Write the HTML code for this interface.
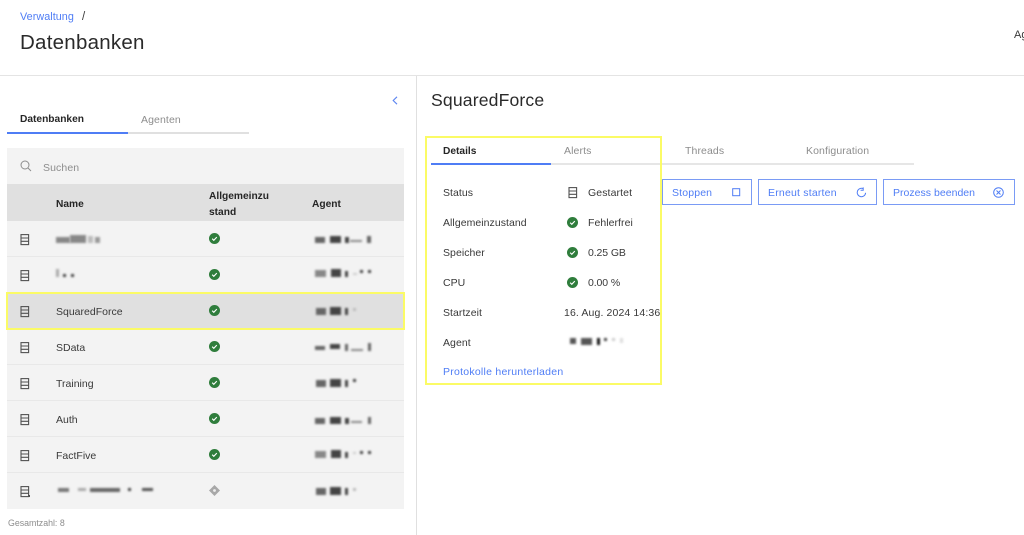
<!DOCTYPE html>
<html lang="de"><head><meta charset="utf-8"><title>Datenbanken</title>
<style>
html,body{margin:0;padding:0;background:#fff}
#p{position:relative;width:1024px;height:535px;overflow:hidden;background:#fff;font-family:"Liberation Sans",sans-serif;color:#393939;font-size:11px}
#p div{position:absolute}
.t{position:absolute;white-space:nowrap;line-height:14px;letter-spacing:0}
.b{font-weight:bold;color:#262626}
.g{color:#8d8d8d}
.l{color:#4f7df5}
.r{left:7px;width:397px;height:35px;background:#f3f3f3;border-bottom:1px solid #e8e8e8}
.btn{top:179px;height:24px;border:1px solid #7a9bf5;background:#fff}
svg{position:absolute;overflow:visible}
i{position:absolute;display:block;background:#444;filter:blur(1px)}
</style></head><body><div id="p">
<svg width="0" height="0" style="position:absolute"><defs>
<g id="db" fill="none" stroke="#525252" stroke-width="1.1"><rect x="1" y=".6" width="7.6" height="10"/><path d="M1 4h7.6M1 7.3h7.6"/></g>
<g id="ok"><circle cx="5.5" cy="5.5" r="5.5" fill="#2f7d3c"/><path d="M3.2 5.7l1.6 1.6 3-3.2" fill="none" stroke="#fff" stroke-width="1.1"/></g>
</defs></svg>

<span class="t l" style="left:20px;top:10px;font-size:10.8px;letter-spacing:.05px">Verwaltung</span>
<span class="t" style="left:82px;top:10px;font-size:11.5px">/</span>
<span class="t" style="left:20px;top:31px;font-size:20.5px;line-height:24px;color:#2a2a2a;letter-spacing:.25px">Datenbanken</span>
<span class="t" style="left:1014px;top:28px;font-size:11px">Ag</span>
<div style="left:0;top:75px;width:1024px;height:1px;background:#e4e4e4"></div>
<div style="left:416px;top:76px;width:1px;height:459px;background:#e0e0e0"></div>

<svg style="left:392px;top:96px" width="6" height="9"><path d="M5 .8L1.2 4.5 5 8.2" fill="none" stroke="#5b84f0" stroke-width="1.1"/></svg>

<span class="t b" style="left:20px;top:113px;font-size:10.2px">Datenbanken</span>
<span class="t g" style="left:141px;top:113px;font-size:10.5px;letter-spacing:.1px">Agenten</span>
<div style="left:128px;top:131.5px;width:121px;height:2px;background:#e0e0e0"></div>
<div style="left:7px;top:131.5px;width:121px;height:2px;background:#4f7df5"></div>

<div style="left:7px;top:148px;width:397px;height:36px;background:#f3f3f3"></div>
<svg style="left:20px;top:160px" width="12" height="12"><circle cx="5" cy="5" r="4" fill="none" stroke="#8d8d8d" stroke-width="1"/><path d="M8 8l3 3" stroke="#8d8d8d" stroke-width="1"/></svg>
<span class="t g" style="left:43px;top:161px;font-size:10.5px;letter-spacing:.1px">Suchen</span>

<div style="left:7px;top:184px;width:397px;height:37px;background:#e0e0e0"></div>
<span class="t b" style="left:56px;top:198px;font-size:10.2px">Name</span>
<span class="t b" style="left:209px;top:189px;font-size:10.2px;line-height:16px;white-space:nowrap">Allgemeinzu<br>stand</span>
<span class="t b" style="left:312px;top:198px;font-size:10.2px">Agent</span>

<div class="r" style="top:221px"></div>
<div class="r" style="top:257px"></div>
<div class="r" style="top:293px;background:#e0e0e0;border:0;height:36px"></div>
<div class="r" style="top:329px"></div>
<div class="r" style="top:365px"></div>
<div class="r" style="top:401px"></div>
<div class="r" style="top:437px"></div>
<div class="r" style="top:473px;border:0;height:36px"></div>

<svg style="left:20px;top:233.5px" width="10" height="11"><use href="#db"/></svg>
<svg style="left:20px;top:269.5px" width="10" height="11"><use href="#db"/></svg>
<svg style="left:20px;top:305.5px" width="10" height="11"><use href="#db"/></svg>
<svg style="left:20px;top:341.5px" width="10" height="11"><use href="#db"/></svg>
<svg style="left:20px;top:377.5px" width="10" height="11"><use href="#db"/></svg>
<svg style="left:20px;top:413.5px" width="10" height="11"><use href="#db"/></svg>
<svg style="left:20px;top:449.5px" width="10" height="11"><use href="#db"/></svg>
<svg style="left:20px;top:485.5px" width="10" height="11"><use href="#db"/><path d="M8 9h2v2H8z" fill="#525252"/></svg>

<span class="t" style="left:56px;top:304.5px;font-size:10.5px">SquaredForce</span>
<span class="t" style="left:56px;top:340.5px;font-size:10.5px">SData</span>
<span class="t" style="left:56px;top:376.5px;font-size:10.5px">Training</span>
<span class="t" style="left:56px;top:412.5px;font-size:10.5px">Auth</span>
<span class="t" style="left:56px;top:448.5px;font-size:10.5px">FactFive</span>

<svg style="left:209px;top:233px" width="11" height="11"><use href="#ok"/></svg>
<svg style="left:209px;top:269px" width="11" height="11"><use href="#ok"/></svg>
<svg style="left:209px;top:305px" width="11" height="11"><use href="#ok"/></svg>
<svg style="left:209px;top:341px" width="11" height="11"><use href="#ok"/></svg>
<svg style="left:209px;top:377px" width="11" height="11"><use href="#ok"/></svg>
<svg style="left:209px;top:413px" width="11" height="11"><use href="#ok"/></svg>
<svg style="left:209px;top:449px" width="11" height="11"><use href="#ok"/></svg>
<svg style="left:209px;top:485px" width="11" height="11"><path d="M5.5 0L11 5.5 5.5 11 0 5.5z" fill="#a8a8a8"/><circle cx="5.5" cy="5.5" r="1.4" fill="#eee"/></svg>

<i style="left:56px;top:237px;width:14px;height:6px;background:#888"></i><i style="left:70px;top:235px;width:16px;height:8px;background:#888"></i><i style="left:88px;top:236px;width:5px;height:7px;background:#bbb"></i><i style="left:95px;top:237px;width:5px;height:6px;background:#999"></i>
<i style="left:56px;top:269px;width:3px;height:8px;background:#aaa"></i><i style="left:63px;top:274px;width:3px;height:3px"></i><i style="left:71px;top:274px;width:3px;height:3px"></i>
<i style="left:58px;top:488px;width:11px;height:4px;background:#777"></i><i style="left:78px;top:488px;width:8px;height:3px;background:#aaa"></i><i style="left:90px;top:488px;width:30px;height:4px;background:#666"></i><i style="left:128px;top:488px;width:3px;height:3px"></i><i style="left:142px;top:488px;width:11px;height:3px;background:#555"></i>

<i style="left:315px;top:237px;width:10px;height:6px;background:#666"></i><i style="left:330px;top:236px;width:11px;height:7px"></i><i style="left:345px;top:237px;width:4px;height:6px"></i><i style="left:350px;top:240px;width:12px;height:2px;background:#888"></i><i style="left:367px;top:236px;width:4px;height:7px;background:#666"></i>
<i style="left:315px;top:270px;width:11px;height:7px;background:#888"></i><i style="left:331px;top:269px;width:10px;height:8px"></i><i style="left:345px;top:271px;width:3px;height:6px"></i><i style="left:353px;top:273px;width:4px;height:2px;background:#ccc"></i><i style="left:360px;top:270px;width:3px;height:3px"></i><i style="left:368px;top:270px;width:3px;height:3px"></i>
<i style="left:316px;top:308px;width:10px;height:7px;background:#666"></i><i style="left:330px;top:307px;width:11px;height:8px"></i><i style="left:345px;top:308px;width:3px;height:7px"></i><i style="left:353px;top:308px;width:3px;height:3px;background:#bbb"></i>
<i style="left:315px;top:346px;width:10px;height:4px;background:#666"></i><i style="left:330px;top:344px;width:10px;height:5px"></i><i style="left:345px;top:344px;width:3px;height:7px;background:#666"></i><i style="left:351px;top:349px;width:12px;height:2px;background:#888"></i><i style="left:368px;top:343px;width:3px;height:8px;background:#666"></i>
<i style="left:316px;top:380px;width:10px;height:7px;background:#666"></i><i style="left:330px;top:379px;width:11px;height:8px"></i><i style="left:345px;top:380px;width:3px;height:7px"></i><i style="left:353px;top:379px;width:3px;height:3px"></i>
<i style="left:315px;top:418px;width:10px;height:6px;background:#666"></i><i style="left:330px;top:417px;width:11px;height:7px"></i><i style="left:345px;top:418px;width:4px;height:6px"></i><i style="left:351px;top:421px;width:11px;height:2px;background:#888"></i><i style="left:368px;top:417px;width:3px;height:7px;background:#666"></i>
<i style="left:315px;top:451px;width:11px;height:7px;background:#888"></i><i style="left:331px;top:450px;width:10px;height:8px"></i><i style="left:345px;top:452px;width:3px;height:6px"></i><i style="left:353px;top:452px;width:3px;height:2px;background:#ccc"></i><i style="left:360px;top:451px;width:3px;height:3px"></i><i style="left:368px;top:451px;width:3px;height:3px"></i>
<i style="left:316px;top:488px;width:10px;height:7px;background:#666"></i><i style="left:330px;top:487px;width:11px;height:8px"></i><i style="left:345px;top:488px;width:3px;height:7px"></i><i style="left:353px;top:488px;width:3px;height:3px;background:#bbb"></i>

<span class="t g" style="left:8px;top:516px;font-size:8.8px">Gesamtzahl: 8</span>
<div style="left:6px;top:292px;width:395px;height:34px;border:2px solid #fbfb66"></div>

<span class="t" style="left:431px;top:89px;font-size:17.6px;line-height:22px;color:#2a2a2a;letter-spacing:.15px">SquaredForce</span>

<span class="t b" style="left:443px;top:145px;font-size:10.2px">Details</span>
<span class="t g" style="left:564px;top:144px;font-size:10.5px;letter-spacing:.1px">Alerts</span>
<span class="t g" style="left:685px;top:144px;font-size:10.5px;letter-spacing:.1px">Threads</span>
<span class="t g" style="left:806px;top:144px;font-size:10.5px;letter-spacing:.1px">Konfiguration</span>
<div style="left:551px;top:163px;width:363px;height:2px;background:#e6e6e6"></div>
<div style="left:431px;top:163px;width:120px;height:2px;background:#4f7df5"></div>

<span class="t" style="left:443px;top:185.5px;font-size:10.5px;letter-spacing:.05px">Status</span>
<span class="t" style="left:443px;top:215.5px;font-size:10.5px;letter-spacing:.05px">Allgemeinzustand</span>
<span class="t" style="left:443px;top:245.5px;font-size:10.5px;letter-spacing:.05px">Speicher</span>
<span class="t" style="left:443px;top:275.5px;font-size:10.5px;letter-spacing:.05px">CPU</span>
<span class="t" style="left:443px;top:305.5px;font-size:10.5px;letter-spacing:.05px">Startzeit</span>
<span class="t" style="left:443px;top:335.5px;font-size:10.5px;letter-spacing:.05px">Agent</span>
<span class="t l" style="left:443px;top:365px;font-size:10.5px;letter-spacing:.25px">Protokolle herunterladen</span>

<svg style="left:568px;top:186.5px" width="10" height="11"><use href="#db"/></svg>
<svg style="left:567px;top:216.5px" width="11" height="11"><use href="#ok"/></svg>
<svg style="left:567px;top:246.5px" width="11" height="11"><use href="#ok"/></svg>
<svg style="left:567px;top:276.5px" width="11" height="11"><use href="#ok"/></svg>
<span class="t" style="left:588px;top:185.5px;font-size:10.5px;letter-spacing:.1px">Gestartet</span>
<span class="t" style="left:588px;top:215.5px;font-size:10.5px;letter-spacing:.05px">Fehlerfrei</span>
<span class="t" style="left:588px;top:245.5px;font-size:10.5px;letter-spacing:-.1px">0.25 GB</span>
<span class="t" style="left:588px;top:275.5px;font-size:10.5px;letter-spacing:-.1px">0.00 %</span>
<span class="t" style="left:564px;top:305.5px;font-size:10.5px;letter-spacing:.12px">16. Aug. 2024 14:36</span>

<i style="left:570px;top:338px;width:6px;height:6px;background:#555"></i><i style="left:581px;top:338px;width:11px;height:7px;background:#555"></i><i style="left:597px;top:338px;width:3px;height:7px;background:#111"></i><i style="left:604px;top:338px;width:3px;height:3px"></i><i style="left:612px;top:338px;width:3px;height:3px;background:#ccc"></i><i style="left:620px;top:338px;width:3px;height:5px;background:#ddd"></i>

<div style="left:425px;top:136px;width:233px;height:245px;border:2px solid #fbfb66"></div>

<div class="btn" style="left:662px;width:88px"></div>
<span class="t l" style="left:672px;top:185.5px;font-size:10.5px;letter-spacing:.15px">Stoppen</span>
<svg style="left:732px;top:188px" width="9" height="9"><rect x=".7" y=".7" width="7" height="7" fill="none" stroke="#4f7df5" stroke-width="1"/></svg>
<div class="btn" style="left:758px;width:117px"></div>
<span class="t l" style="left:768px;top:185.5px;font-size:10.5px;letter-spacing:.2px">Erneut starten</span>
<svg style="left:856px;top:187px" width="11" height="11"><path d="M9.6 5.8a4.2 4.2 0 1 1-2.2-4M7.2.4v2.8h-2.6" fill="none" stroke="#4f7df5" stroke-width="1"/></svg>
<div class="btn" style="left:883px;width:130px"></div>
<span class="t l" style="left:893px;top:185.5px;font-size:10.5px;letter-spacing:.02px">Prozess beenden</span>
<svg style="left:993px;top:187px" width="11" height="11"><circle cx="5.5" cy="5.5" r="4.8" fill="none" stroke="#4f7df5" stroke-width="1"/><path d="M3.5 3.5l4 4M7.5 3.5l-4 4" stroke="#4f7df5" stroke-width="1"/></svg>
</div></body></html>
